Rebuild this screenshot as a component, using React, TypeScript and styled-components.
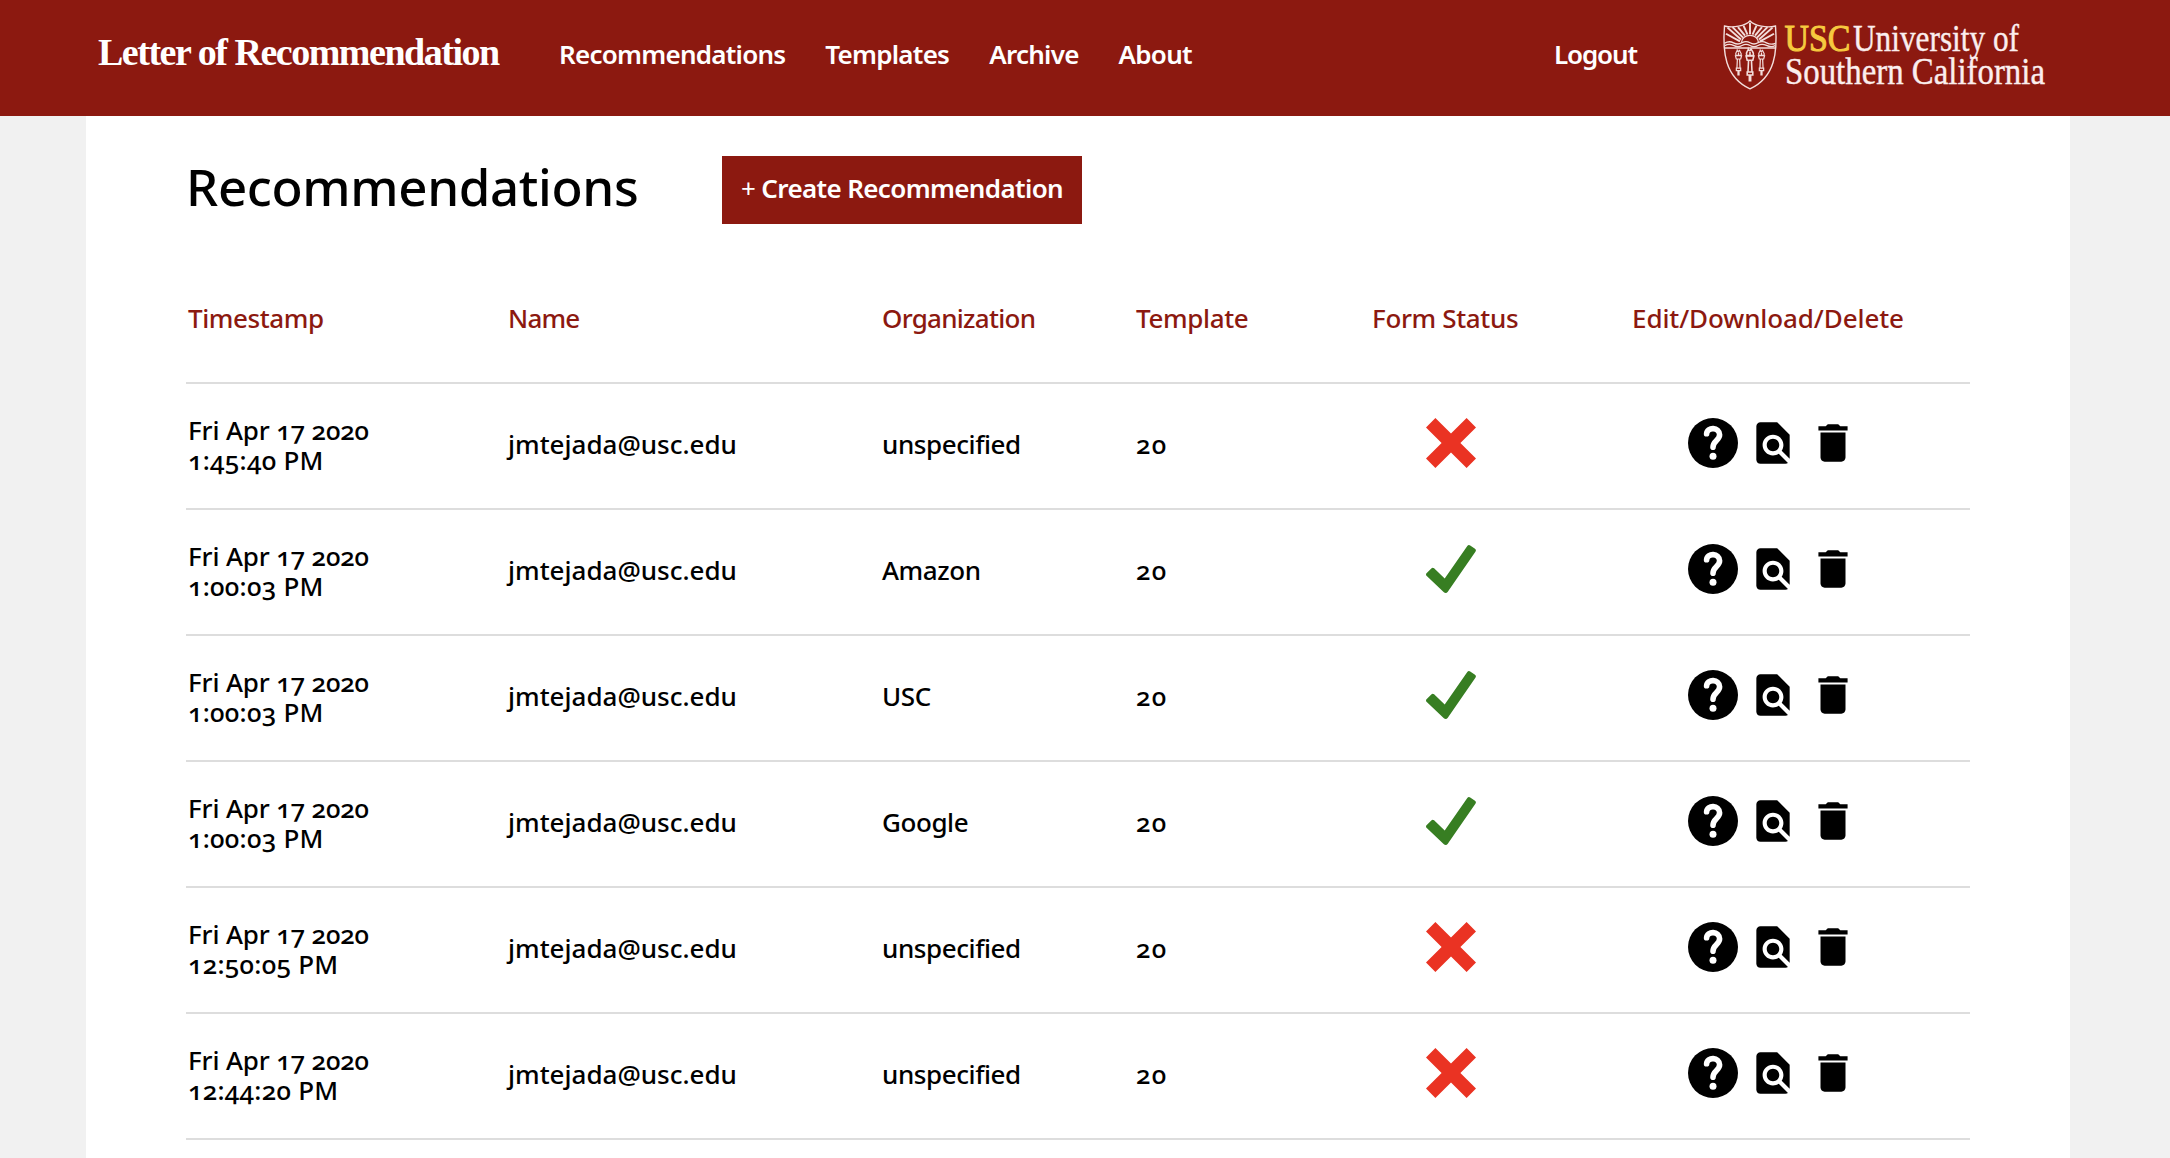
import React from "react";
import styled, { createGlobalStyle } from "styled-components";
import { MdDelete, MdFindInPage } from "react-icons/md";

const cardinal = "#8c1910";
const gold = "#f6c93f";
const sans = `"Noto Sans", "Open Sans", sans-serif`;
const serif = `"Liberation Serif", "Times New Roman", serif`;

const GlobalStyle = createGlobalStyle`
  * { box-sizing: border-box; }
  html, body { margin: 0; height: 1158px; overflow: hidden; }
  body {
    background: #f1f1f1;
    color: #000;
    font-family: ${sans};
    font-size: 26px;
    font-weight: 500;
    line-height: 30px;
    font-feature-settings: "onum" 1;
  }
`;

const Header = styled.header`
  display: flex;
  align-items: center;
  height: 116px;
  padding: 0 125px 0 98px;
  background: ${cardinal};
  color: #fff;
`;

const Brand = styled.a`
  width: 461px;
  padding-bottom: 12px;
  font-family: ${serif};
  font-size: 38px;
  font-weight: 700;
  line-height: 44px;
  letter-spacing: -1.48px;
  white-space: nowrap;
`;

const Nav = styled.nav`
  display: flex;
  flex: 1;
  gap: 40px;
  padding-bottom: 8px;
`;

const NavLink = styled.a<{ $tracking?: number }>`
  font-weight: 600;
  letter-spacing: ${(p) => p.$tracking ?? -0.75}px;
  white-space: nowrap;
`;

const Logout = styled(NavLink)`
  padding-bottom: 8px;
  margin-right: 84px;
`;

const Logo = styled.svg`
  display: block;
  flex: none;
  width: 324px;
  height: 74px;
  margin-bottom: 4px;
  overflow: visible;
`;

const LogoText = styled.text`
  font-family: ${serif};
  font-size: 38px;
  font-weight: 400;
`;

const Panel = styled.main`
  width: 1984px;
  height: 1042px;
  margin-left: 86px;
  padding: 0 100px;
  background: #fff;
  overflow: hidden;
`;

const TitleBar = styled.div`
  display: flex;
  align-items: center;
  height: 148px;
`;

const Title = styled.h1`
  width: 536px;
  margin: 0;
  padding: 0 0 8px;
  font-size: 51px;
  font-weight: 500;
  line-height: 60px;
  letter-spacing: -0.35px;
  white-space: nowrap;
`;

const CreateButton = styled.button`
  width: 360px;
  height: 68px;
  padding: 0 0 4px;
  border: 0;
  background: ${cardinal};
  color: #fff;
  font: inherit;
  font-weight: 600;
  letter-spacing: -0.64px;
  white-space: nowrap;
`;

const Plus = styled.span`
  font-weight: 400;
`;

const Row = styled.div`
  display: grid;
  grid-template-columns: 321px 374px 254px 237px 259px 1fr;
  align-items: center;
  height: 126px;
  border-bottom: 2px solid #ddd;
`;

const HeadRow = styled(Row)`
  height: 120px;
  padding-bottom: 5px;
  color: ${cardinal};
`;

const Cell = styled.div<{ $tracking?: number; $inset?: number }>`
  padding-left: ${(p) => p.$inset ?? 1}px;
  padding-bottom: 5px;
  letter-spacing: ${(p) => p.$tracking ?? 0}px;
  white-space: nowrap;
`;

const Stamp = styled.div`
  display: flex;
  flex-direction: column;
  padding: 0 0 2px 2px;
`;

const StampLine = styled.span<{ $tracking: number }>`
  letter-spacing: ${(p) => p.$tracking}px;
  white-space: nowrap;
`;

const StatusCell = styled.div`
  display: flex;
  padding: 0 0 6px 54px;
`;

const Actions = styled.div`
  display: flex;
  gap: 10px;
  padding: 0 0 6px 57px;
`;

const Glyph = styled.svg`
  display: block;
  width: 50px;
  height: 50px;
`;

const Cross = () => (
  <Glyph viewBox="0 0 50 50" fill="#ea3323">
    <path d="M9.4 0 25 15.6 40.6 0 50 9.4 34.4 25 50 40.6 40.6 50 25 34.4 9.4 50 0 40.6 15.6 25 0 9.4Z" />
  </Glyph>
);

const Check = () => (
  <Glyph viewBox="0 0 50 50" fill="#377e22">
    <path d="M.5 29.3 5.3 24.4Q6.7 23.1 8.1 24.3L18.7 34.4 41.3 2Q42.5.3 44.2 1.4L49 4.8Q50.6 6 49.4 7.7L21.8 47.8Q20 50 17.6 48.1L.5 31.8Q-.5 30.5.5 29.3Z" />
  </Glyph>
);

const Help = () => (
  <Glyph viewBox="0 0 50 50">
    <circle cx="25" cy="25" r="25" />
    <path
      d="M18.6 15.8C19 8.6 31.6 8.8 31.6 16.8 31.6 22.4 25 22.6 25 29.2"
      fill="none"
      stroke="#fff"
      strokeWidth="5.6"
      strokeLinecap="round"
    />
    <circle cx="25" cy="38.2" r="3.5" fill="#fff" />
  </Glyph>
);

const rays = [
  [4.5, 8, 18, 20.5],
  [9.5, 7.5, 20, 18.5],
  [15, 7.5, 22, 16.5],
  [20.5, 6, 24.5, 15.5],
  [27, 3, 27, 15],
  [33.5, 6, 29.5, 15.5],
  [39, 7.5, 32, 16.5],
  [44.5, 7.5, 34, 18.5],
  [49.5, 8, 36, 20.5],
  [3, 14.5, 17, 22.5],
  [51, 14.5, 37, 22.5],
];

const torches = [
  { x: 15.5, y: 31.5, s: 0.87 },
  { x: 27, y: 30, s: 1.12 },
  { x: 38.5, y: 31.5, s: 0.87 },
];

const UniversityLogo = () => (
  <Logo viewBox="0 0 324 74">
    <g transform="translate(2 1) scale(1 .95)" fill="none" stroke="#f3dedc" strokeWidth="1.4">
      <path d="M27 1C22 6.5 10 8.5 1.5 6.3-.5 33 1.5 60 27 72.5 52.5 60 54.5 33 52.5 6.3 44 8.5 32 6.5 27 1Z" />
      {rays.map(([x1, y1, x2, y2]) => (
        <line key={`${x1}-${y1}`} x1={x1} y1={y1} x2={x2} y2={y2} strokeWidth="1.9" />
      ))}
      <path d="M18.5 24C18.5 13.5 35.5 13.5 35.5 24" />
      <path d="M1.5 24.5Q6 21.5 10.5 24T19 24 27 24 35 24 43.5 24 52.5 24.5" />
      <path d="M1.8 27Q6 24.5 10.5 26.8T19 26.8 27 26.8 35 26.8 43.5 26.8 52.2 27" />
      <path d="M2 29.5H52" />
      {torches.map(({ x, y, s }) => (
        <g key={x} transform={`translate(${x} ${y}) scale(${s})`}>
          <path d="M-3 6.5C-4 3-2 3-1.5.5-.5 3 .5 2 1 0 1.500 3 4 3.5 3 6.5Z" />
          <path d="M-3.5 7H3.5L2.5 11H-2.5ZM-1.3 11-1.8 22M1.3 11 1.8 22M-2.5 22H2.5V25H-2.5ZM-.6 25V31M.6 25V31M0 3V7" />
        </g>
      ))}
    </g>
    <g fill="#fbeeee" stroke="#fbeeee" strokeWidth=".4">
      <LogoText x="63.5" y="32.3" textLength="66" lengthAdjust="spacingAndGlyphs" fill={gold} stroke={gold} strokeWidth="1">
        USC
      </LogoText>
      <LogoText x="132" y="32.3" textLength="166" lengthAdjust="spacingAndGlyphs">
        University of
      </LogoText>
      <LogoText x="64" y="65.2" textLength="260" lengthAdjust="spacingAndGlyphs">
        Southern California
      </LogoText>
    </g>
  </Logo>
);

interface Recommendation {
  date: string;
  time: string;
  name: string;
  organization: string;
  template: string;
  complete: boolean;
}

const entry = (time: string, organization: string, complete: boolean): Recommendation => ({
  date: "Fri Apr 17 2020",
  time,
  name: "jmtejada@usc.edu",
  organization,
  template: "20",
  complete,
});

const recommendations: Recommendation[] = [
  entry("1:45:40 PM", "unspecified", false),
  entry("1:00:03 PM", "Amazon", true),
  entry("1:00:03 PM", "USC", true),
  entry("1:00:03 PM", "Google", true),
  entry("12:50:05 PM", "unspecified", false),
  entry("12:44:20 PM", "unspecified", false),
];

export default function App() {
  return (
    <>
      <GlobalStyle />
      <Header>
        <Brand>Letter of Recommendation</Brand>
        <Nav>
          <NavLink>Recommendations</NavLink>
          <NavLink>Templates</NavLink>
          <NavLink>Archive</NavLink>
          <NavLink>About</NavLink>
        </Nav>
        <Logout $tracking={-1.1}>Logout</Logout>
        <UniversityLogo />
      </Header>
      <Panel>
        <TitleBar>
          <Title>Recommendations</Title>
          <CreateButton>
            <Plus>+</Plus> Create Recommendation
          </CreateButton>
        </TitleBar>
        <HeadRow>
          <Cell $inset={2} $tracking={-0.4}>Timestamp</Cell>
          <Cell $tracking={-0.8}>Name</Cell>
          <Cell $tracking={-0.72}>Organization</Cell>
          <Cell $tracking={-0.35}>Template</Cell>
          <Cell $inset={0} $tracking={-0.35}>Form Status</Cell>
          <Cell $tracking={-0.1}>Edit/Download/Delete</Cell>
        </HeadRow>
        {recommendations.map((r, i) => (
          <Row key={i}>
            <Stamp>
              <StampLine $tracking={-0.15}>{r.date}</StampLine>
              <StampLine $tracking={0.25}>{r.time}</StampLine>
            </Stamp>
            <Cell>{r.name}</Cell>
            <Cell $tracking={-0.42}>{r.organization}</Cell>
            <Cell $tracking={1.2}>{r.template}</Cell>
            <StatusCell>{r.complete ? <Check /> : <Cross />}</StatusCell>
            <Actions>
              <Help />
              <MdFindInPage size={50} />
              <MdDelete size={50} />
            </Actions>
          </Row>
        ))}
      </Panel>
    </>
  );
}
